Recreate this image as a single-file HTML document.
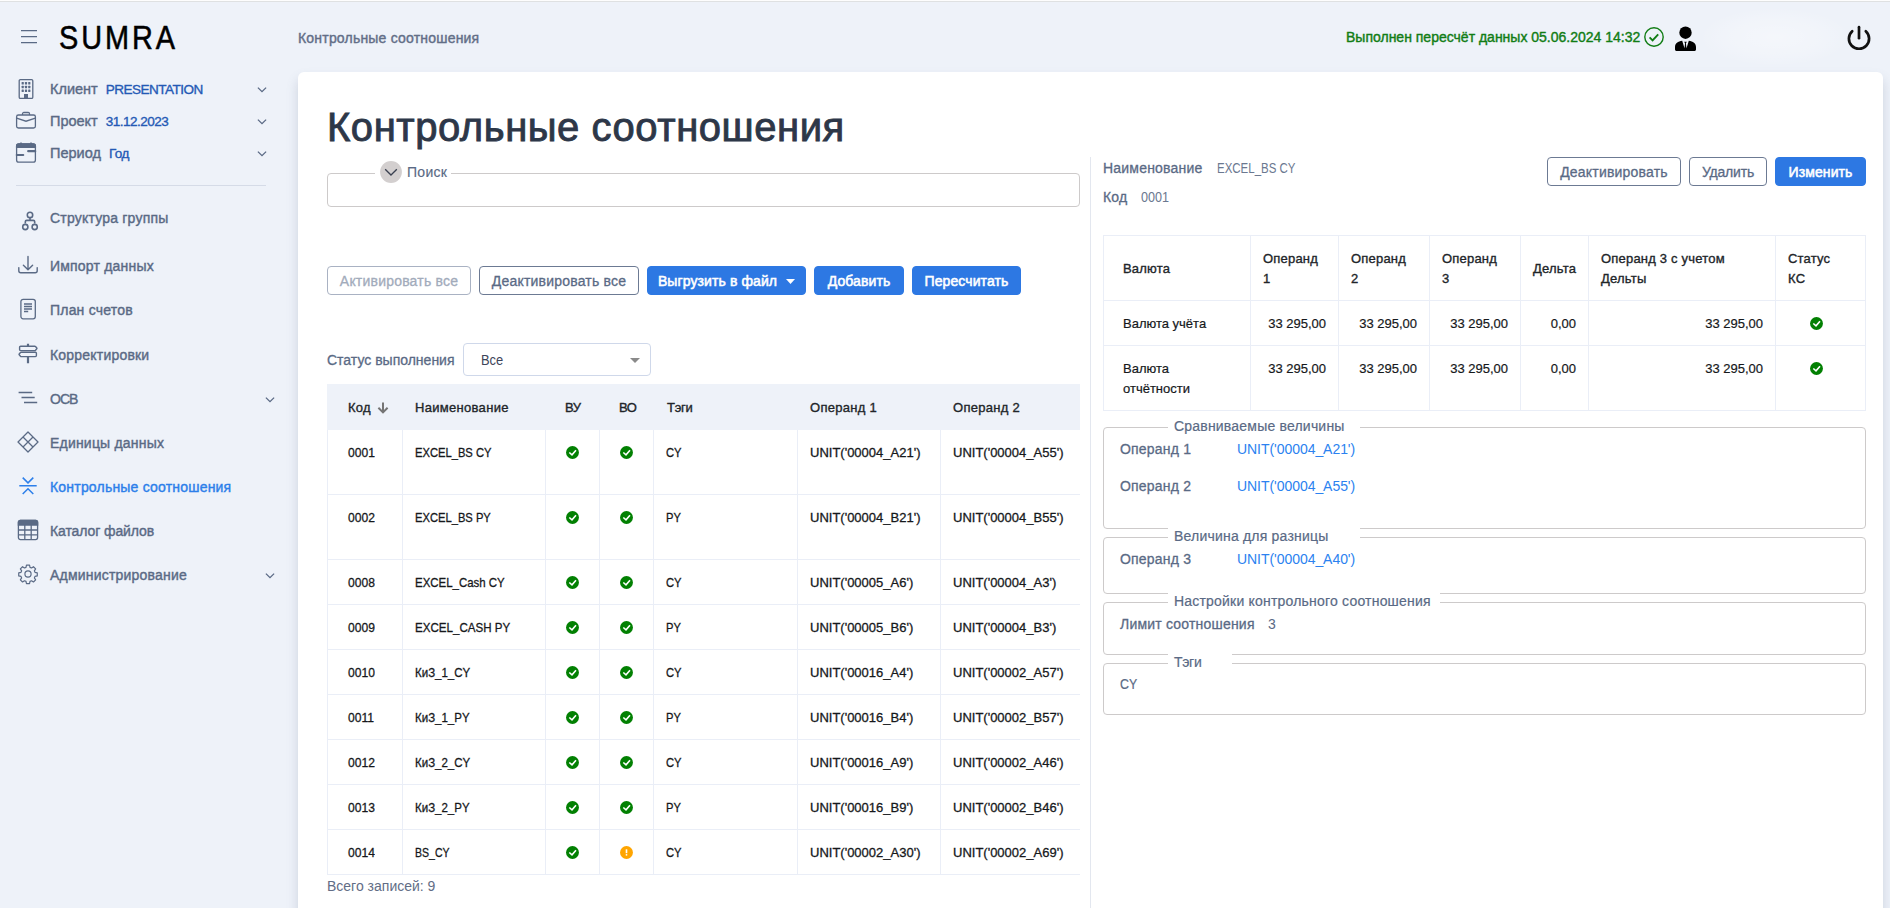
<!DOCTYPE html>
<html lang="ru">
<head>
<meta charset="utf-8">
<title>SUMRA — Контрольные соотношения</title>
<style>
*{box-sizing:border-box;margin:0;padding:0}
html,body{width:1890px;height:908px;overflow:hidden}
body{background:#eef2f9;font-family:"Liberation Sans",sans-serif;font-size:15px;color:#5a6a85;position:relative}
.abs{position:absolute;white-space:nowrap}
.topline{position:absolute;left:0;top:0;width:1890px;height:2px;background:linear-gradient(#fdfdfd 0 1px,#dfe1e2 1px 2px)}
/* sidebar */
.logo{left:59px;top:17px;font-size:34px;line-height:40px;color:#000;letter-spacing:3.400px;transform:scaleX(.85);transform-origin:0 0;-webkit-text-stroke:.55px #000}
.sel{left:50px;height:20px;line-height:20px;font-size:14.500px;color:#5a6a85}
.sel b{font-weight:400;font-size:13.500px;letter-spacing:-.5px;color:#2459b5;margin-left:4px;-webkit-text-stroke:.35px #2459b5}
.nav{left:50px;height:20px;line-height:20px;font-size:14px;letter-spacing:.2px;color:#5a6a85}
.nav.act{color:#2c7fea}
.sw{-webkit-text-stroke:.4px currentColor}
.ico{position:absolute}
.divider{position:absolute;left:16px;top:185px;width:250px;height:1px;background:#d5dbe7}
/* top bar */
.crumb{left:298px;top:28px;font-size:14px;line-height:20px;color:#626e87;letter-spacing:.2px;-webkit-text-stroke:.4px #626e87}
.status{left:1346px;top:27px;font-size:14px;line-height:20px;color:#117d15}
/* card */
.card{position:absolute;left:298px;top:72px;width:1585px;height:860px;background:#fff;border-radius:6px 6px 0 0;box-shadow:0 7px 12px rgba(95,108,140,.24)}
h1{position:absolute;left:327px;top:103px;font-size:40px;line-height:48px;font-weight:400;color:#2d3748;letter-spacing:.55px;-webkit-text-stroke:.9px #2d3748;white-space:nowrap}
.fs{position:absolute;border:1px solid #cdcaca;border-radius:4px}
.lg{position:absolute;background:#fff;white-space:nowrap;font-size:14px;letter-spacing:.2px;line-height:20px;color:#5a6a85;-webkit-text-stroke:.2px #5a6a85}
.btn{position:absolute;height:29px;line-height:28px;border-radius:4px;font-size:14px;letter-spacing:.2px;text-align:center;white-space:nowrap;border:1px solid #6c7a93;color:#5a6a85;background:#fff;-webkit-text-stroke:.3px currentColor}
.btn.dis{border-color:#a9b2c3;color:#a2abbb}
.btn.pri{background:#2d78e3;border-color:#2d78e3;color:#fff;letter-spacing:.1px;-webkit-text-stroke:.55px #fff}
.split{position:absolute;left:1090px;top:157px;width:1px;height:760px;background:#e3e7ef}

/* left panel */
.tblwrap{position:absolute;left:327px;top:384px;width:753px;height:492px;overflow:hidden}
table{border-collapse:separate;border-spacing:0;table-layout:fixed}
.lt{width:920px;font-size:13px;line-height:20px;color:#16181b}
.lt th{height:46px;background:#eef2f9;text-align:left;font-weight:400;color:#212529;padding:14px 12px 12px 12px;vertical-align:top;white-space:nowrap;-webkit-text-stroke:.35px #212529;letter-spacing:.3px}
.lt td{height:45px;padding:13px 12px 11px 12px;vertical-align:top;border-right:1px solid #eaeef7;border-bottom:1px solid #eaeef7;white-space:nowrap;-webkit-text-stroke:.3px #16181b}
.lt tr.tall td{height:65px}
.lt td:first-child,.lt th:first-child{padding-left:21px}
.lt td:first-child{border-left:1px solid #eaeef7;padding-left:20px}
.lt td.c{padding-left:0;padding-right:0;text-align:center}
.ok,.warn{display:inline-block;width:13px;height:13px;vertical-align:top;margin-top:3px}
.foot{left:327px;top:876px;font-size:14px;line-height:20px;color:#626d86}
.selbox{position:absolute;left:463px;top:343px;width:188px;height:33px;border:1px solid #cfd8ea;border-radius:4px;background:#fff}
/* right panel */
.rt{position:absolute;left:1103px;top:235px;width:762px;font-size:13px;line-height:20px;color:#16181b;border-top:1px solid #eaeef7;border-left:1px solid #eaeef7}
.rt th,.rt td{border-right:1px solid #eaeef7;border-bottom:1px solid #eaeef7;padding:13px 12px 11px 12px;vertical-align:top;font-weight:400;text-align:left;-webkit-text-stroke:.2px #16181b}
.rt th{vertical-align:middle;-webkit-text-stroke:.35px #212529;color:#212529;letter-spacing:.2px}
.rt td.n{text-align:right;white-space:nowrap}
.rt td.c{text-align:center}
.rt th:first-child,.rt td:first-child{padding-left:19px}
.rt th:last-child,.rt td:last-child{padding-right:20px}
.lab{font-size:14px;line-height:20px;color:#5a6a85;letter-spacing:.2px;-webkit-text-stroke:.3px #5a6a85}
.val{font-size:14px;line-height:20px;color:#6b7890}
.lnk{font-size:14px;line-height:20px;color:#2b82f0;letter-spacing:-.05px}
.nx{display:inline-block;transform-origin:0 0}
</style>
</head>
<body>
<div class="topline"></div>

<!-- SIDEBAR -->
<div id="sidebar">
  <svg class="ico" style="left:20px;top:29px" width="18" height="16" viewBox="0 0 18 16"><path d="M1 1.600h16M1 7.600h16M1 13.600h16" stroke="#5a6a85" stroke-width="1.300" fill="none"/></svg>
  <div class="abs logo">SUMRA</div>

  <!-- selectors -->
  <svg class="ico" style="left:16px;top:77px" width="22" height="24" viewBox="0 0 22 24" fill="none" stroke="#5a6a85" stroke-width="1.3"><rect x="3.2" y="2.6" width="13.6" height="18.8" rx="1.2"/><g fill="#5a6a85" stroke="none"><rect x="5.6" y="5" width="2.2" height="2.4" rx=".5"/><rect x="8.9" y="5" width="2.2" height="2.4" rx=".5"/><rect x="12.2" y="5" width="2.2" height="2.4" rx=".5"/><rect x="5.6" y="8.8" width="2.2" height="2.4" rx=".5"/><rect x="8.9" y="8.8" width="2.2" height="2.4" rx=".5"/><rect x="12.2" y="8.8" width="2.2" height="2.4" rx=".5"/><rect x="5.6" y="12.6" width="2.2" height="2.4" rx=".5"/><rect x="8.9" y="12.6" width="2.2" height="2.4" rx=".5"/><rect x="12.2" y="12.6" width="2.2" height="2.4" rx=".5"/><rect x="8" y="17" width="4" height="4.4"/></g></svg>
  <div class="abs sel sw" style="top:79px">Клиент <b>PRESENTATION</b></div>
  <svg class="ico chev" style="left:256px;top:85.500px" width="12" height="8" viewBox="0 0 12 8"><path d="M1.900 1.600L6 5.700l4.100-4.100" stroke="#5a6a85" stroke-width="1.3" fill="none"/></svg>

  <svg class="ico" style="left:14px;top:110px" width="24" height="20" viewBox="0 0 24 20" fill="none" stroke="#5a6a85" stroke-width="1.3"><rect x="2.600" y="5" width="18.800" height="13" rx="1.800"/><path d="M8.500 5V3.800a1.300 1.300 0 0 1 1.300-1.300h4.400a1.300 1.300 0 0 1 1.300 1.300V5"/><path d="M2.600 8.200L12 11.200l9.400-3"/></svg>
  <div class="abs sel sw" style="top:111px">Проект <b>31.12.2023</b></div>
  <svg class="ico chev" style="left:256px;top:117.500px" width="12" height="8" viewBox="0 0 12 8"><path d="M1.900 1.600L6 5.700l4.100-4.100" stroke="#5a6a85" stroke-width="1.300" fill="none"/></svg>

  <svg class="ico" style="left:14px;top:141px" width="24" height="24" viewBox="0 0 24 24" fill="none" stroke="#5a6a85" stroke-width="1.300"><rect x="2.600" y="3" width="18.800" height="18.200" rx="2.200"/><path d="M2.600 6.400V5.200a2.200 2.200 0 0 1 2.200-2.200h14.400a2.200 2.200 0 0 1 2.200 2.200v1.200z" fill="#5a6a85"/><path d="M7 1.600v2M17 1.600v2" stroke-width="1.600"/><path d="M14.200 10.200h7M2.800 14h6.400" stroke-width="2.200" stroke-linecap="round"/></svg>
  <div class="abs sel sw" style="top:143px">Период <b>Год</b></div>
  <svg class="ico chev" style="left:256px;top:149.500px" width="12" height="8" viewBox="0 0 12 8"><path d="M1.900 1.600L6 5.700l4.100-4.100" stroke="#5a6a85" stroke-width="1.300" fill="none"/></svg>

  <div class="divider"></div>

  <!-- nav -->
  <svg class="ico" style="left:18px;top:209px" width="24" height="24" viewBox="0 0 24 24" fill="none" stroke="#5a6a85" stroke-width="1.600"><circle cx="12" cy="5.900" r="2.700"/><circle cx="7.300" cy="18" r="2.600"/><circle cx="16.700" cy="18" r="2.600"/><path d="M12 8.600v2.800M7.300 14.600v-1.800a1.400 1.400 0 0 1 1.400-1.400h6.600a1.400 1.400 0 0 1 1.400 1.400v1.800"/></svg>
  <div class="abs nav sw" style="top:208px">Структура группы</div>

  <svg class="ico" style="left:16px;top:254px" width="24" height="22" viewBox="0 0 24 22" fill="none" stroke="#5a6a85" stroke-width="1.400" stroke-linecap="round" stroke-linejoin="round"><path d="M12 2.400v13M7.400 11.200L12 15.800l4.600-4.600"/><path d="M2.800 13.600v3.200a2 2 0 0 0 2 2h14.400a2 2 0 0 0 2-2v-3.200"/></svg>
  <div class="abs nav sw" style="top:256px">Импорт данных</div>

  <svg class="ico" style="left:18px;top:297px" width="20" height="24" viewBox="0 0 20 24" fill="none" stroke="#5a6a85" stroke-width="1.300"><rect x="2.900" y="2.400" width="14.400" height="19.400" rx="2.200"/><path d="M6 7h8M6 9.500h8M6 12h8M6 14.500h4.200" stroke-width="1.400"/></svg>
  <div class="abs nav sw" style="top:300px">План счетов</div>

  <svg class="ico" style="left:16px;top:342px" width="24" height="23" viewBox="0 0 24 23" fill="none" stroke="#5a6a85" stroke-width="1.400" stroke-linejoin="round"><path d="M12 1.800v2.400M12 15v6.200" stroke-width="2.200"/><path d="M4.600 4.200h14.200a1 1 0 0 1 .7.300l1.300 1.500a.6.600 0 0 1 0 .8l-1.300 1.500a1 1 0 0 1-.7.300H4.600a1 1 0 0 1-1-1v-2.400a1 1 0 0 1 1-1z"/><path d="M19.400 10.200H5.200a1 1 0 0 0-.7.300l-1.300 1.500a.6.600 0 0 0 0 .8l1.300 1.500a1 1 0 0 0 .7.300h14.200a1 1 0 0 0 1-1v-2.400a1 1 0 0 0-1-1z"/></svg>
  <div class="abs nav sw" style="top:345px">Корректировки</div>

  <svg class="ico" style="left:16px;top:388px" width="24" height="20" viewBox="0 0 24 20" fill="none" stroke="#5a6a85" stroke-width="1.300"><path d="M2.600 4.500h13.600M5.500 9.500h13.200M8 14.500h13.200"/></svg>
  <div class="abs nav sw" style="top:389px;letter-spacing:-1px">ОСВ</div>
  <svg class="ico chev" style="left:264px;top:396px" width="12" height="8" viewBox="0 0 12 8"><path d="M1.900 1.600L6 5.700l4.100-4.100" stroke="#5a6a85" stroke-width="1.300" fill="none"/></svg>

  <svg class="ico" style="left:16px;top:430px" width="24" height="24" viewBox="0 0 24 24" fill="none" stroke="#5a6a85" stroke-width="1.300" stroke-linejoin="round"><path d="M12 2L22 12 12 22 2 12z"/><path d="M7 7l10 10M17 7L7 17"/></svg>
  <div class="abs nav sw" style="top:433px">Единицы данных</div>

  <svg class="ico" style="left:16px;top:474px" width="24" height="24" viewBox="0 0 24 24" fill="none" stroke="#2c7fea" stroke-width="1.500"><path d="M3.300 11.800h17.400M6.700 3.600L12 8.900l5.300-5.300M6.700 20L12 14.700l5.300 5.300"/></svg>
  <div class="abs nav act sw" style="top:477px">Контрольные соотношения</div>

  <svg class="ico" style="left:16px;top:518px" width="24" height="24" viewBox="0 0 24 24" fill="none" stroke="#5a6a85" stroke-width="1.300"><rect x="2.400" y="2.400" width="19.200" height="19.200" rx="2"/><path d="M2.400 7V4.400a2 2 0 0 1 2-2h15.200a2 2 0 0 1 2 2V7z" fill="#5a6a85"/><path d="M2.400 12h19.200M2.400 16.800h19.200M8.800 7v14.600M15.200 7v14.600"/></svg>
  <div class="abs nav sw" style="top:521px;letter-spacing:-.1px">Каталог файлов</div>

  <svg class="ico" style="left:16px;top:562px" width="24" height="24" viewBox="-1.200 -1.200 26.400 26.400" fill="none" stroke="#5a6a85" stroke-width="1.300" stroke-linejoin="round"><circle cx="12" cy="12" r="3.400"/><path d="M10.300 2.200h3.400l.5 2.500 1.700.7 2.100-1.400 2.400 2.400-1.400 2.100.7 1.700 2.500.5v3.400l-2.500.5-.7 1.700 1.400 2.100-2.400 2.400-2.100-1.400-1.700.7-.5 2.500h-3.400l-.5-2.500-1.700-.7-2.100 1.400-2.400-2.400 1.400-2.100-.7-1.700-2.500-.5v-3.400l2.500-.5.7-1.700-1.400-2.100 2.400-2.400 2.100 1.400 1.700-.7z"/></svg>
  <div class="abs nav sw" style="top:565px">Администрирование</div>
  <svg class="ico chev" style="left:264px;top:572px" width="12" height="8" viewBox="0 0 12 8"><path d="M1.900 1.600L6 5.700l4.100-4.100" stroke="#5a6a85" stroke-width="1.300" fill="none"/></svg>
</div>

<!-- TOP BAR -->
<div class="abs crumb">Контрольные соотношения</div>
<div class="abs status sw">Выполнен пересчёт данных 05.06.2024 14:32</div>

<svg class="ico" style="left:1643px;top:26px" width="22" height="22" viewBox="0 0 22 22" fill="none" stroke="#117d15"><circle cx="11" cy="11" r="9.200" stroke-width="1.400"/><path d="M6.600 11.300l3 3 5.600-6" stroke-width="1.900"/></svg>
<svg class="ico" style="left:1673px;top:24px" width="26" height="28" viewBox="0 0 26 28"><circle cx="12.500" cy="8.700" r="6.200" fill="#000"/><path d="M2 25.600v-2.600c0-3.600 3-5.400 7.200-6.200l2.300 7.400.6-4.600-.9-1.800h2.600l-.9 1.800.6 4.600 2.300-7.400c4.200.8 7.200 2.600 7.200 6.200v2.600a1.300 1.300 0 0 1-1.300 1.300H3.300A1.300 1.300 0 0 1 2 25.600z" fill="#000"/></svg>
<svg class="ico" style="left:1845px;top:24px" width="28" height="28" viewBox="0 0 28 28" fill="none" stroke="#111" stroke-width="2.700" stroke-linecap="round"><path d="M14 3.200v11"/><path d="M7.200 7.200a10.100 10.100 0 1 0 13.600 0"/></svg>

<div style="position:absolute;left:1700px;top:8px;width:150px;height:58px;background:radial-gradient(ellipse at center,rgba(255,255,255,.38) 0,rgba(255,255,255,.2) 45%,rgba(255,255,255,0) 72%)"></div>
<!-- CARD -->
<div class="card"></div>
<h1>Контрольные соотношения</h1>
<div class="split"></div>


<!-- LEFT PANEL -->
<div class="fs" style="left:327px;top:173px;width:753px;height:34px"></div>
<div class="lg" style="left:375px;top:162px;width:76px;height:22px"></div>
<svg class="ico" style="left:380px;top:161px" width="22" height="22" viewBox="0 0 22 22"><circle cx="11" cy="11" r="10.900" fill="#d3cfcf"/><path d="M5.200 8.200L11 14l5.800-5.800" stroke="#3a4050" stroke-width="1.300" fill="none"/></svg>
<div class="abs lab" style="left:407px;top:162px;letter-spacing:.3px;-webkit-text-stroke:.15px #5a6a85">Поиск</div>

<div class="btn dis" style="left:327px;top:266px;width:144px">Активировать все</div>
<div class="btn" style="left:479px;top:266px;width:160px">Деактивировать все</div>
<div class="btn pri" style="left:647px;top:266px;width:159px">Выгрузить в файл <svg width="9" height="5" viewBox="0 0 9 5" style="margin-left:5px;vertical-align:2px"><path d="M0 0h9L4.500 5z" fill="#fff"/></svg></div>
<div class="btn pri" style="left:814px;top:266px;width:90px">Добавить</div>
<div class="btn pri" style="left:912px;top:266px;width:109px">Пересчитать</div>

<div class="abs lab sw" style="left:327px;top:350px;letter-spacing:0">Статус выполнения</div>
<div class="selbox"><span class="abs val" style="left:17px;top:6px;color:#3d4459;transform:scaleX(.92);transform-origin:0 0">Все</span><svg class="ico" style="left:166px;top:14px" width="10" height="5" viewBox="0 0 10 5"><path d="M0 0h10L5 5z" fill="#8a8a8a"/></svg></div>

<div class="tblwrap"><table class="lt">
<colgroup><col style="width:76px"><col style="width:143px"><col style="width:54px"><col style="width:54px"><col style="width:144px"><col style="width:143px"><col style="width:306px"></colgroup>
<thead><tr><th>Код <svg width="12" height="12" viewBox="0 0 12 12" style="margin-left:2px;vertical-align:-1.500px"><path d="M6 .5v9.600M1.400 5.800L6 10.400l4.600-4.600" stroke="#757575" stroke-width="2" fill="none"/></svg></th><th>Наименование</th><th style="padding-left:19px;letter-spacing:-.5px">ВУ</th><th style="padding-left:19px;letter-spacing:-.5px">ВО</th><th style="padding-left:13px;letter-spacing:-.3px">Тэги</th><th>Операнд 1</th><th>Операнд 2</th></tr></thead>
<tbody>
<tr class="tall"><td><span class="nx" style="transform:scaleX(.930)">0001</span></td><td><span class="nx" style="transform:scaleX(.860)">EXCEL_BS CY</span></td><td class="c"><svg class="ok" viewBox="0 0 13 13"><circle cx="6.500" cy="6.500" r="6.450" fill="#028002"/><path d="M3.300 6.500l2.700 2.300 4-4.500" stroke="#fff" stroke-width="1.600" fill="none" stroke-linejoin="miter"/></svg></td><td class="c"><svg class="ok" viewBox="0 0 13 13"><circle cx="6.500" cy="6.500" r="6.450" fill="#028002"/><path d="M3.300 6.500l2.700 2.300 4-4.500" stroke="#fff" stroke-width="1.600" fill="none" stroke-linejoin="miter"/></svg></td><td><span class="nx" style="transform:scaleX(.860)">CY</span></td><td>UNIT('00004_A21')</td><td>UNIT('00004_A55')</td></tr>
<tr class="tall"><td><span class="nx" style="transform:scaleX(.930)">0002</span></td><td><span class="nx" style="transform:scaleX(.860)">EXCEL_BS PY</span></td><td class="c"><svg class="ok" viewBox="0 0 13 13"><circle cx="6.500" cy="6.500" r="6.450" fill="#028002"/><path d="M3.300 6.500l2.700 2.300 4-4.500" stroke="#fff" stroke-width="1.600" fill="none" stroke-linejoin="miter"/></svg></td><td class="c"><svg class="ok" viewBox="0 0 13 13"><circle cx="6.500" cy="6.500" r="6.450" fill="#028002"/><path d="M3.300 6.500l2.700 2.300 4-4.500" stroke="#fff" stroke-width="1.600" fill="none" stroke-linejoin="miter"/></svg></td><td><span class="nx" style="transform:scaleX(.860)">PY</span></td><td>UNIT('00004_B21')</td><td>UNIT('00004_B55')</td></tr>
<tr><td><span class="nx" style="transform:scaleX(.930)">0008</span></td><td><span class="nx" style="transform:scaleX(.880)">EXCEL_Cash CY</span></td><td class="c"><svg class="ok" viewBox="0 0 13 13"><circle cx="6.500" cy="6.500" r="6.450" fill="#028002"/><path d="M3.300 6.500l2.700 2.300 4-4.500" stroke="#fff" stroke-width="1.600" fill="none" stroke-linejoin="miter"/></svg></td><td class="c"><svg class="ok" viewBox="0 0 13 13"><circle cx="6.500" cy="6.500" r="6.450" fill="#028002"/><path d="M3.300 6.500l2.700 2.300 4-4.500" stroke="#fff" stroke-width="1.600" fill="none" stroke-linejoin="miter"/></svg></td><td><span class="nx" style="transform:scaleX(.860)">CY</span></td><td>UNIT('00005_A6')</td><td>UNIT('00004_A3')</td></tr>
<tr><td><span class="nx" style="transform:scaleX(.930)">0009</span></td><td><span class="nx" style="transform:scaleX(.890)">EXCEL_CASH PY</span></td><td class="c"><svg class="ok" viewBox="0 0 13 13"><circle cx="6.500" cy="6.500" r="6.450" fill="#028002"/><path d="M3.300 6.500l2.700 2.300 4-4.500" stroke="#fff" stroke-width="1.600" fill="none" stroke-linejoin="miter"/></svg></td><td class="c"><svg class="ok" viewBox="0 0 13 13"><circle cx="6.500" cy="6.500" r="6.450" fill="#028002"/><path d="M3.300 6.500l2.700 2.300 4-4.500" stroke="#fff" stroke-width="1.600" fill="none" stroke-linejoin="miter"/></svg></td><td><span class="nx" style="transform:scaleX(.860)">PY</span></td><td>UNIT('00005_B6')</td><td>UNIT('00004_B3')</td></tr>
<tr><td><span class="nx" style="transform:scaleX(.930)">0010</span></td><td><span class="nx" style="transform:scaleX(.885)">КиЗ_1_CY</span></td><td class="c"><svg class="ok" viewBox="0 0 13 13"><circle cx="6.500" cy="6.500" r="6.450" fill="#028002"/><path d="M3.300 6.500l2.700 2.300 4-4.500" stroke="#fff" stroke-width="1.600" fill="none" stroke-linejoin="miter"/></svg></td><td class="c"><svg class="ok" viewBox="0 0 13 13"><circle cx="6.500" cy="6.500" r="6.450" fill="#028002"/><path d="M3.300 6.500l2.700 2.300 4-4.500" stroke="#fff" stroke-width="1.600" fill="none" stroke-linejoin="miter"/></svg></td><td><span class="nx" style="transform:scaleX(.860)">CY</span></td><td>UNIT('00016_A4')</td><td>UNIT('00002_A57')</td></tr>
<tr><td><span class="nx" style="transform:scaleX(.930)">0011</span></td><td><span class="nx" style="transform:scaleX(.885)">КиЗ_1_PY</span></td><td class="c"><svg class="ok" viewBox="0 0 13 13"><circle cx="6.500" cy="6.500" r="6.450" fill="#028002"/><path d="M3.300 6.500l2.700 2.300 4-4.500" stroke="#fff" stroke-width="1.600" fill="none" stroke-linejoin="miter"/></svg></td><td class="c"><svg class="ok" viewBox="0 0 13 13"><circle cx="6.500" cy="6.500" r="6.450" fill="#028002"/><path d="M3.300 6.500l2.700 2.300 4-4.500" stroke="#fff" stroke-width="1.600" fill="none" stroke-linejoin="miter"/></svg></td><td><span class="nx" style="transform:scaleX(.860)">PY</span></td><td>UNIT('00016_B4')</td><td>UNIT('00002_B57')</td></tr>
<tr><td><span class="nx" style="transform:scaleX(.930)">0012</span></td><td><span class="nx" style="transform:scaleX(.885)">КиЗ_2_CY</span></td><td class="c"><svg class="ok" viewBox="0 0 13 13"><circle cx="6.500" cy="6.500" r="6.450" fill="#028002"/><path d="M3.300 6.500l2.700 2.300 4-4.500" stroke="#fff" stroke-width="1.600" fill="none" stroke-linejoin="miter"/></svg></td><td class="c"><svg class="ok" viewBox="0 0 13 13"><circle cx="6.500" cy="6.500" r="6.450" fill="#028002"/><path d="M3.300 6.500l2.700 2.300 4-4.500" stroke="#fff" stroke-width="1.600" fill="none" stroke-linejoin="miter"/></svg></td><td><span class="nx" style="transform:scaleX(.860)">CY</span></td><td>UNIT('00016_A9')</td><td>UNIT('00002_A46')</td></tr>
<tr><td><span class="nx" style="transform:scaleX(.930)">0013</span></td><td><span class="nx" style="transform:scaleX(.885)">КиЗ_2_PY</span></td><td class="c"><svg class="ok" viewBox="0 0 13 13"><circle cx="6.500" cy="6.500" r="6.450" fill="#028002"/><path d="M3.300 6.500l2.700 2.300 4-4.500" stroke="#fff" stroke-width="1.600" fill="none" stroke-linejoin="miter"/></svg></td><td class="c"><svg class="ok" viewBox="0 0 13 13"><circle cx="6.500" cy="6.500" r="6.450" fill="#028002"/><path d="M3.300 6.500l2.700 2.300 4-4.500" stroke="#fff" stroke-width="1.600" fill="none" stroke-linejoin="miter"/></svg></td><td><span class="nx" style="transform:scaleX(.860)">PY</span></td><td>UNIT('00016_B9')</td><td>UNIT('00002_B46')</td></tr>
<tr><td><span class="nx" style="transform:scaleX(.930)">0014</span></td><td><span class="nx" style="transform:scaleX(.810)">BS_CY</span></td><td class="c"><svg class="ok" viewBox="0 0 13 13"><circle cx="6.500" cy="6.500" r="6.450" fill="#028002"/><path d="M3.300 6.500l2.700 2.300 4-4.500" stroke="#fff" stroke-width="1.600" fill="none" stroke-linejoin="miter"/></svg></td><td class="c"><svg class="warn" viewBox="0 0 13 13"><circle cx="6.500" cy="6.500" r="6.450" fill="#ffa500"/><rect x="5.700" y="3.300" width="1.600" height="3.900" fill="#fff"/><rect x="5.750" y="8.100" width="1.500" height="1.500" fill="#fff"/></svg></td><td><span class="nx" style="transform:scaleX(.860)">CY</span></td><td>UNIT('00002_A30')</td><td>UNIT('00002_A69')</td></tr>
</tbody></table></div>
<div class="abs foot">Всего записей: 9</div>

<!-- RIGHT PANEL -->
<div class="abs lab sw" style="left:1103px;top:158px">Наименование</div>
<div class="abs val" style="left:1217px;top:158px;transform:scaleX(.82);transform-origin:0 0">EXCEL_BS CY</div>
<div class="abs lab sw" style="left:1103px;top:187px">Код</div>
<div class="abs val" style="left:1141px;top:187px;transform:scaleX(.9);transform-origin:0 0">0001</div>
<div class="btn" style="left:1547px;top:157px;width:134px">Деактивировать</div>
<div class="btn" style="left:1689px;top:157px;width:78px;letter-spacing:-.2px">Удалить</div>
<div class="btn pri" style="left:1775px;top:157px;width:91px">Изменить</div>

<table class="rt">
<colgroup><col style="width:147px"><col style="width:88px"><col style="width:91px"><col style="width:91px"><col style="width:68px"><col style="width:187px"><col style="width:90px"></colgroup>
<thead><tr style="height:65px"><th>Валюта</th><th>Операнд 1</th><th>Операнд 2</th><th>Операнд 3</th><th>Дельта</th><th>Операнд 3 с учетом Дельты</th><th>Статус<br>КС</th></tr></thead>
<tbody>
<tr style="height:45px"><td>Валюта учёта</td><td class="n">33 295,00</td><td class="n">33 295,00</td><td class="n">33 295,00</td><td class="n">0,00</td><td class="n">33 295,00</td><td class="c"><svg class="ok" viewBox="0 0 13 13"><circle cx="6.500" cy="6.500" r="6.450" fill="#028002"/><path d="M3.300 6.500l2.700 2.300 4-4.500" stroke="#fff" stroke-width="1.600" fill="none" stroke-linejoin="miter"/></svg></td></tr>
<tr style="height:65px"><td>Валюта отчётности</td><td class="n">33 295,00</td><td class="n">33 295,00</td><td class="n">33 295,00</td><td class="n">0,00</td><td class="n">33 295,00</td><td class="c"><svg class="ok" viewBox="0 0 13 13"><circle cx="6.500" cy="6.500" r="6.450" fill="#028002"/><path d="M3.300 6.500l2.700 2.300 4-4.500" stroke="#fff" stroke-width="1.600" fill="none" stroke-linejoin="miter"/></svg></td></tr>
</tbody></table>

<div class="fs" style="left:1103px;top:427px;width:763px;height:102px"></div>
<div class="lg" style="left:1168px;top:416px;width:192px;padding-left:6px">Сравниваемые величины</div>
<div class="abs lab" style="left:1120px;top:439px">Операнд 1</div>
<div class="abs lnk" style="left:1237px;top:439px">UNIT('00004_A21')</div>
<div class="abs lab" style="left:1120px;top:476px">Операнд 2</div>
<div class="abs lnk" style="left:1237px;top:476px">UNIT('00004_A55')</div>

<div class="fs" style="left:1103px;top:537px;width:763px;height:57px"></div>
<div class="lg" style="left:1168px;top:526px;width:192px;padding-left:6px">Величина для разницы</div>
<div class="abs lab" style="left:1120px;top:549px">Операнд 3</div>
<div class="abs lnk" style="left:1237px;top:549px">UNIT('00004_A40')</div>

<div class="fs" style="left:1103px;top:602px;width:763px;height:53px"></div>
<div class="lg" style="left:1168px;top:591px;width:272px;padding-left:6px">Настройки контрольного соотношения</div>
<div class="abs lab" style="left:1120px;top:614px">Лимит соотношения</div>
<div class="abs val" style="left:1268px;top:614px;color:#5a6a85">3</div>

<div class="fs" style="left:1103px;top:663px;width:763px;height:52px"></div>
<div class="lg" style="left:1168px;top:652px;width:64px;padding-left:6px;letter-spacing:-.3px">Тэги</div>
<div class="abs val" style="left:1120px;top:674px;color:#5a6a85;transform:scaleX(.88);transform-origin:0 0;-webkit-text-stroke:.2px #5a6a85">CY</div>

</body>
</html>
